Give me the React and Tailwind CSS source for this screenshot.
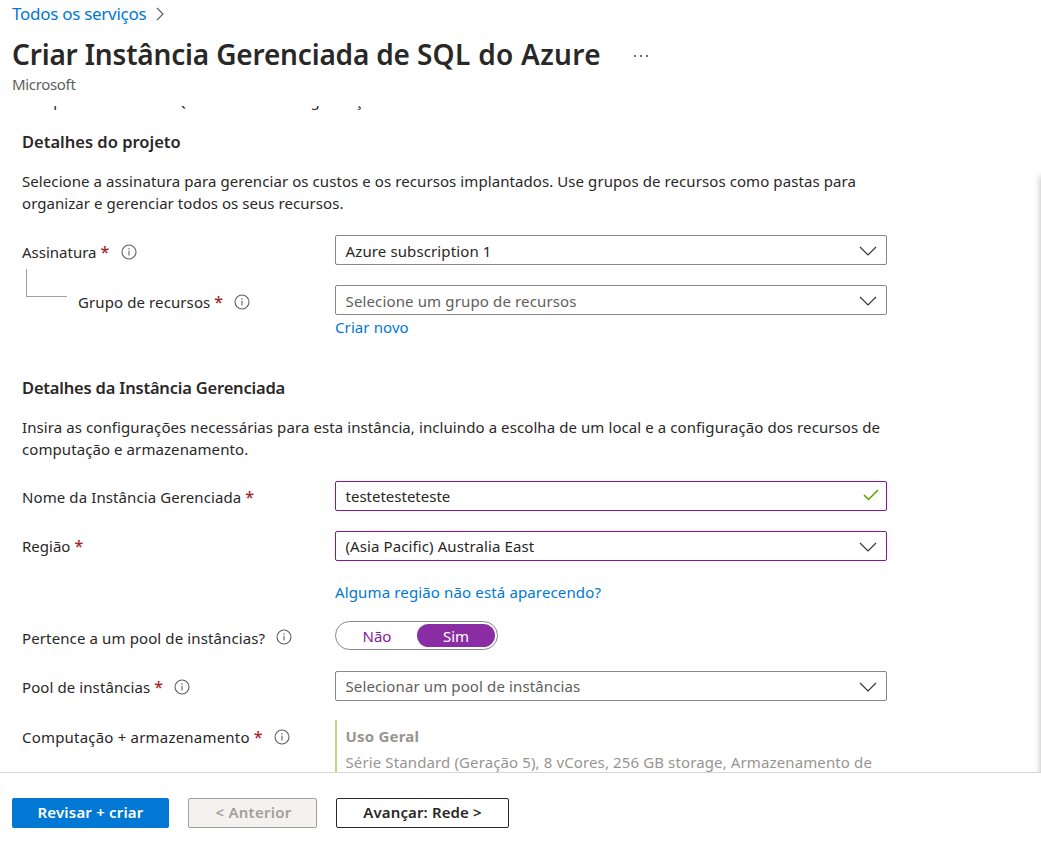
import React from "react";

function Info({ className = "" }) {
  return (
    <svg className={`h-4 w-4 shrink-0 ${className}`} viewBox="0 0 16 16" fill="none">
      <circle cx="8" cy="8" r="7" stroke="#605e5c" strokeWidth="1.1" />
      <path d="M8 6.8V11.5" stroke="#605e5c" strokeWidth="1.1" />
      <path d="M8 4.3V5.5" stroke="#605e5c" strokeWidth="1.2" />
    </svg>
  );
}

function Chevron() {
  return (
    <svg className="mt-[2px] h-[10px] w-[18px] shrink-0" viewBox="0 0 18 10" fill="none">
      <path d="M1 1L9 9L17 1" stroke="#323130" strokeWidth="1.1" />
    </svg>
  );
}

function Star() {
  return <span className="ml-1 w-[9px] text-[16px] font-medium text-[#a4262c]">*</span>;
}

function Row({ label, labelClass = "", pad = "pt-[6px]", star, info, infoClass = "", className = "", children }) {
  return (
    <div className={`flex items-start ${className}`}>
      <div className={`flex w-[313px] shrink-0 items-start ${pad}`}>
        <span className={labelClass}>{label}</span>
        {star && <Star />}
        {info && <Info className={infoClass} />}
      </div>
      {children}
    </div>
  );
}

function Field({ children, textClass = "", border = "border-[#8a8886]", icon }) {
  return (
    <div className={`flex h-[30px] w-[552px] items-center justify-between rounded-[2px] border pr-[9px] pl-[9.5px] ${border}`}>
      <span className={textClass}>{children}</span>
      {icon || <Chevron />}
    </div>
  );
}

function Check() {
  return (
    <svg className="mr-[-2px] mb-[3px] h-[12px] w-[16px] shrink-0" viewBox="0 0 16 12" fill="none">
      <path d="M1 6L5.5 10.5L15 1" stroke="#57a300" strokeWidth="1.5" />
    </svg>
  );
}

export default function App() {
  return (
    <div className="flex h-[842px] w-[1041px] flex-col overflow-hidden bg-white font-['Noto_Sans',sans-serif] text-[15px] leading-[22px] whitespace-nowrap text-[#292827]">
      <header className="h-[106px] shrink-0 pl-3">
        <div className="flex h-[26px] items-center pt-[2px]">
          <a className="text-[17px] tracking-[-0.28px] text-[#0078d4]">Todos os serviços</a>
          <svg className="ml-[9px] h-[14px] w-[10px]" viewBox="0 0 10 14" fill="none">
            <path d="M2 1L8 7L2 13" stroke="#605e5c" strokeWidth="1.1" />
          </svg>
        </div>
        <div className="flex h-[48px] items-center pt-[8px]">
          <h1 className="text-[28px] leading-[40px] font-semibold tracking-[-0.18px]">
            Criar Instância Gerenciada de <span className="tracking-[0.3px]">SQL do Azure</span>
          </h1>
          <svg className="mt-[4px] ml-[32px] h-[4px] w-[16px]" viewBox="0 0 16 4">
            <circle cx="2" cy="2" r="0.9" fill="#292827" />
            <circle cx="8" cy="2" r="0.9" fill="#292827" />
            <circle cx="14" cy="2" r="0.9" fill="#292827" />
          </svg>
        </div>
        <div className="mt-[-1px] tracking-[-0.33px] text-[#605e5c]">Microsoft</div>
      </header>

      <main className="relative h-[666px] shrink-0 overflow-hidden pl-[22px]">
        <div className="mt-[-17px] flex h-[22px] pl-px">
          <span className="w-[144px]">completa servidor</span>
          <span className="w-[129px]">SQL e todos os</span>
          <span className="tracking-[-0.3px]">organização</span>
        </div>
        <h2 className="mt-[20px] text-[16.5px] font-semibold">Detalhes do projeto</h2>
        <p className="mt-[17px]">
          <span className="block tracking-[0.08px]">Selecione a assinatura para gerenciar os custos e os recursos implantados. Use grupos de recursos como pastas para</span>
          <span className="block tracking-[0.05px]">organizar e gerenciar todos os seus recursos.</span>
        </p>

        <Row className="mt-[21px] h-[34px]" label="Assinatura" star info infoClass="mt-[3px] ml-[11px]">
          <Field textClass="pt-[2px] tracking-[0.12px]">Azure subscription 1</Field>
        </Row>
        <div className="flex h-[82px]">
          <div className="mr-[11px] ml-1 h-[28px] w-[41px] shrink-0 border-b border-l border-[#a19f9d]" />
          <div className="mt-[16px] flex w-[257px] shrink-0 items-start pt-[6px]">
            <span className="tracking-[0.1px]">Grupo de recursos</span>
            <Star />
            <Info className="mt-[3px] ml-[11px]" />
          </div>
          <div className="mt-[16px]">
            <Field textClass="pt-[2px] tracking-[0.14px] text-[#605e5c]">Selecione um grupo de recursos</Field>
            <a className="mt-[1px] block tracking-[0.1px] text-[#0078d4]">Criar novo</a>
          </div>
        </div>

        <h2 className="mt-[25px] pt-px text-[16.5px] font-semibold tracking-[-0.2px]">Detalhes da Instância Gerenciada</h2>
        <p className="mt-[17px]">
          <span className="block tracking-[0.085px]">Insira as configurações necessárias para esta instância, incluindo a escolha de um local e a configuração dos recursos de</span>
          <span className="block tracking-[0.08px]">computação e armazenamento.</span>
        </p>

        <Row className="mt-[21px] h-[50px]" pad="pt-[5px]" label="Nome da Instância Gerenciada" labelClass="tracking-[0.1px]" star>
          <Field border="border-[#881798]" icon={<Check />}>testetesteteste</Field>
        </Row>
        <Row className="h-[50px]" pad="pt-[4px]" label="Região" star>
          <Field border="border-[#881798]" textClass="tracking-[0.1px]">(Asia Pacific) Australia East</Field>
        </Row>
        <a className="ml-[313px] block h-[40px] tracking-[0.14px] text-[#0078d4]">Alguma região não está aparecendo?</a>
        <Row className="h-[50px]" label="Pertence a um pool de instâncias?" labelClass="tracking-[0.12px]" info infoClass="mt-[2px] ml-[10.5px]">
          <div className="flex h-[29px] w-[163px] items-center rounded-full border border-[#8a8886] p-[2px]">
            <span className="w-[78px] text-center text-[#881798]">Não</span>
            <span className="ml-px h-[23px] w-[78px] rounded-full bg-[#8a2da5] pt-px text-center text-white">Sim</span>
          </div>
        </Row>
        <Row className="h-[49px]" pad="pt-[5px]" label="Pool de instâncias" labelClass="tracking-[0.09px]" star info infoClass="mt-[3px] ml-[11px]">
          <Field textClass="tracking-[0.12px] text-[#605e5c]">Selecionar um pool de instâncias</Field>
        </Row>
        <Row label="Computação + armazenamento" labelClass="tracking-[0.2px]" star info infoClass="mt-[3px] ml-[11px]">
          <div className="h-[78px] border-l-2 border-[#bad980] pt-[5px] pl-[8.5px] text-[#979593]">
            <div className="font-bold tracking-[0.2px]">Uso Geral</div>
            <div className="mt-[4px] tracking-[0.12px]">Série Standard (Geração 5), 8 vCores, 256 GB storage, Armazenamento de</div>
          </div>
        </Row>
        <div className="absolute top-[70px] left-full h-[620px] w-4 shadow-[0_0_7px_rgba(0,0,0,0.3)]" />
      </main>

      <footer className="flex h-[70px] shrink-0 gap-[19px] border-t border-[#d8d6d4] pt-[25px] pl-3 font-semibold">
        <button className="h-[30px] w-[157px] rounded-[2px] bg-[#0078d4] pb-[2px] tracking-[0.19px] text-white">Revisar + criar</button>
        <button className="h-[30px] w-[129px] rounded-[2px] border border-[#a19f9d] bg-[#f3f2f1] pb-[2px] pl-[2px] tracking-[0.25px] text-[#a19f9d]">&lt; Anterior</button>
        <button className="h-[30px] w-[173px] rounded-[2px] border border-[#292827] bg-white pb-[2px] tracking-[0.12px]">Avançar: Rede &gt;</button>
      </footer>
    </div>
  );
}
